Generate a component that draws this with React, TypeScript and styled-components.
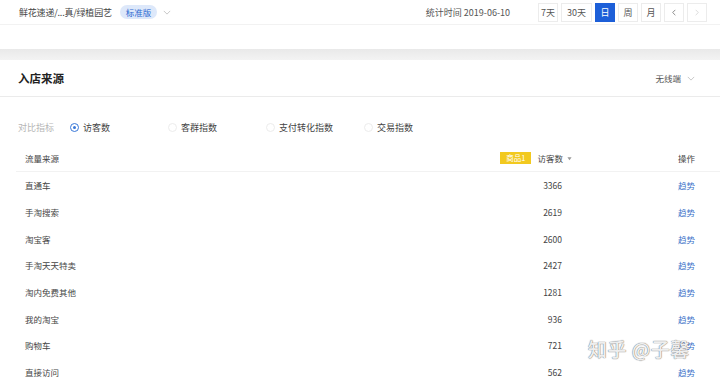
import React from 'react'
import styled, { createGlobalStyle } from 'styled-components'

const GlobalStyle = createGlobalStyle`
  html, body {
    margin: 0;
    padding: 0;
    background: #fff;
  }
  body {
    font-family: "Noto Sans CJK SC", "Noto Sans", "Liberation Sans", sans-serif;
    color: #333;
  }
`

const rows = [
  { name: '直通车', value: 3366 },
  { name: '手淘搜索', value: 2619 },
  { name: '淘宝客', value: 2600 },
  { name: '手淘天天特卖', value: 2427 },
  { name: '淘内免费其他', value: 1281 },
  { name: '我的淘宝', value: 936 },
  { name: '购物车', value: 721 },
  { name: '直接访问', value: 562 },
]

const metrics = ['访客数', '客群指数', '支付转化指数', '交易指数']
const ranges = ['7天', '30天', '日', '周', '月']

export default function App() {
  return (
    <Page>
      <GlobalStyle />
      <TopBar>
        <ShopName>鲜花速递/...真/绿植园艺</ShopName>
        <Edition>标准版</Edition>
        <Chevron viewBox="0 0 10 6">
          <polyline points="1 1 5 5 9 1" />
        </Chevron>
        <Spacer />
        <StatTime>统计时间 2019-06-10</StatTime>
        <RangeGroup>
          {ranges.map((r) => (
            <RangeButton key={r} active={r === '日'} wide={r === '30天'}>
              {r}
            </RangeButton>
          ))}
          <RangeButton>
            <ArrowIcon viewBox="0 0 6 10">
              <polyline points="5 1 1 5 5 9" />
            </ArrowIcon>
          </RangeButton>
          <RangeButton faded>
            <ArrowIcon viewBox="0 0 6 10">
              <polyline points="1 1 5 5 1 9" />
            </ArrowIcon>
          </RangeButton>
        </RangeGroup>
      </TopBar>
      <BlankBand />
      <GrayBand />
      <Card>
        <CardHeader>
          <CardTitle>入店来源</CardTitle>
          <DeviceSelect>
            无线端
            <Chevron viewBox="0 0 10 6">
              <polyline points="1 1 5 5 9 1" />
            </Chevron>
          </DeviceSelect>
        </CardHeader>
        <FilterRow>
          <FilterLabel>对比指标</FilterLabel>
          {metrics.map((m, i) => (
            <RadioItem key={m}>
              <Radio checked={i === 0} />
              {m}
            </RadioItem>
          ))}
        </FilterRow>
        <Table>
          <HeaderRow>
            <span>流量来源</span>
            <HeaderMetric>
              <Badge>商品1</Badge>
              访客数
              <SortArrow viewBox="0 0 6 6">
                <polygon points="0.5 1.5 5.5 1.5 3 5" />
              </SortArrow>
            </HeaderMetric>
            <ActionCell>操作</ActionCell>
          </HeaderRow>
          {rows.map((r) => (
            <Row key={r.name}>
              <span>{r.name}</span>
              <NumberCell>{r.value}</NumberCell>
              <ActionCell>
                <TrendLink>趋势</TrendLink>
              </ActionCell>
            </Row>
          ))}
          <Watermark>知乎 @子馨</Watermark>
        </Table>
      </Card>
    </Page>
  )
}

const Page = styled.div`
  width: 720px;
  height: 385px;
  overflow: hidden;
  background: #fff;
`

const TopBar = styled.div`
  display: flex;
  align-items: center;
  height: 24px;
  padding: 0 13px 0 19px;
  border-bottom: 1px solid #f2f2f2;
  font-size: 9px;
  color: #444;
`

const ShopName = styled.span`
  letter-spacing: -0.2px;
`

const Edition = styled.span`
  margin-left: 8px;
  padding: 0 6px;
  height: 14px;
  line-height: 14px;
  border-radius: 7px;
  background: #dde8fa;
  color: #2f6bd1;
  font-size: 8.5px;
`

const Chevron = styled.svg`
  width: 8px;
  height: 5px;
  margin-left: 6px;
  fill: none;
  stroke: #bbb;
  stroke-width: 1;
`

const Spacer = styled.div`
  flex: 1;
`

const StatTime = styled.span`
  color: #555;
  margin-right: 28px;
`

const RangeGroup = styled.div`
  display: flex;
  gap: 3px;
`

const RangeButton = styled.div<{ active?: boolean; wide?: boolean; faded?: boolean }>`
  display: flex;
  align-items: center;
  justify-content: center;
  width: ${({ wide }) => (wide ? '31px' : '20px')};
  height: 19px;
  box-sizing: border-box;
  border: 1px solid ${({ active }) => (active ? '#1d5fd8' : '#ececec')};
  background: ${({ active }) => (active ? '#1d5fd8' : '#fff')};
  color: ${({ active, faded }) => (active ? '#fff' : faded ? '#ccc' : '#555')};
  font-size: 9px;
`

const ArrowIcon = styled.svg`
  width: 4px;
  height: 7px;
  fill: none;
  stroke: currentColor;
  stroke-width: 1;
`

const BlankBand = styled.div`
  height: 24px;
`

const GrayBand = styled.div`
  height: 11px;
  background: linear-gradient(#e9e9e9, #f3f3f3);
`

const Card = styled.div`
  background: #fff;
`

const CardHeader = styled.div`
  display: flex;
  align-items: center;
  justify-content: space-between;
  height: 36px;
  padding: 0 25px 0 18px;
  border-bottom: 1px solid #ebebeb;
`

const CardTitle = styled.span`
  font-size: 11.5px;
  font-weight: 600;
  color: #222;
`

const DeviceSelect = styled.span`
  display: flex;
  align-items: center;
  font-size: 8.5px;
  color: #555;
`

const FilterRow = styled.div`
  display: flex;
  align-items: center;
  height: 18px;
  margin-top: 21px;
  padding-left: 18px;
  font-size: 9px;
  color: #444;
`

const FilterLabel = styled.span`
  width: 52px;
  color: #b5b5b5;
`

const RadioItem = styled.label`
  display: flex;
  align-items: center;
  gap: 4px;
  width: 98px;
`

const Radio = styled.span<{ checked?: boolean }>`
  position: relative;
  width: 9px;
  height: 9px;
  box-sizing: border-box;
  border-radius: 50%;
  border: 1px solid ${({ checked }) => (checked ? '#3a78d8' : '#ececec')};

  &::after {
    content: '';
    display: ${({ checked }) => (checked ? 'block' : 'none')};
    position: absolute;
    left: 2px;
    top: 2px;
    width: 3px;
    height: 3px;
    border-radius: 50%;
    background: #3a78d8;
  }
`

const Table = styled.div`
  position: relative;
  margin: 9px 0 0 16px;
  font-size: 8.5px;
  color: #444;
`

const Row = styled.div`
  display: grid;
  grid-template-columns: 1fr 100px 133px;
  align-items: center;
  height: 26.7px;
  padding: 0 25px 0 9px;
`

const HeaderRow = styled(Row)`
  height: 26px;
  border-bottom: 1px solid #f2f2f2;
`

const HeaderMetric = styled.span`
  display: flex;
  align-items: center;
  justify-content: flex-end;
  margin-right: -10px;
  white-space: nowrap;
`

const Badge = styled.span`
  display: inline-block;
  height: 12px;
  line-height: 12px;
  padding: 0 6px;
  margin-right: 6px;
  background: #f2c91f;
  color: #fff;
  font-size: 7.5px;
`

const SortArrow = styled.svg`
  width: 5px;
  height: 5px;
  margin-left: 4px;
  fill: #999;
`

const NumberCell = styled.span`
  text-align: right;
`

const ActionCell = styled.span`
  text-align: right;
`

const TrendLink = styled.a`
  color: #3b73c9;
  cursor: pointer;
`

const Watermark = styled.div`
  position: absolute;
  left: 572px;
  top: 190px;
  font-size: 19px;
  font-weight: 500;
  color: rgba(255, 255, 255, 0.9);
  text-shadow: 0 0 1px #777, 0 0 1px #777;
  white-space: nowrap;
  letter-spacing: 0.5px;
`
